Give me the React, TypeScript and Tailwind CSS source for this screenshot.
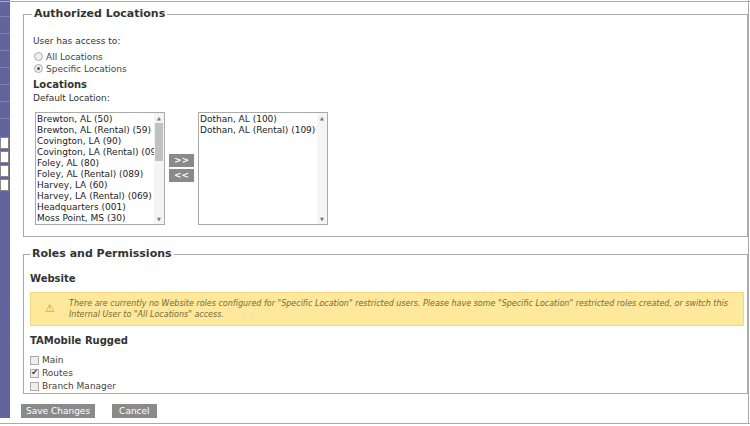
const left = [
  "Brewton, AL (50)",
  "Brewton, AL (Rental) (59)",
  "Covington, LA (90)",
  "Covington, LA (Rental) (099)",
  "Foley, AL (80)",
  "Foley, AL (Rental) (089)",
  "Harvey, LA (60)",
  "Harvey, LA (Rental) (069)",
  "Headquarters (001)",
  "Moss Point, MS (30)",
];
const right = ["Dothan, AL (100)", "Dothan, AL (Rental) (109)"];

const verdana = { fontFamily: "'DejaVu Sans', Verdana, sans-serif" };

function Legend({ children }: { children: string }) {
  return (
    <legend className="px-[2px] text-[11px] font-bold text-[#333]" style={verdana}>
      {children}
    </legend>
  );
}

function Radio({ checked }: { checked?: boolean }) {
  return (
    <span className="inline-flex w-[9px] h-[9px] rounded-full border border-[#aaa] bg-[#eee] items-center justify-center mr-[3px]">
      {checked && <span className="w-[3px] h-[3px] rounded-full bg-[#555]" />}
    </span>
  );
}

function Check({ checked }: { checked?: boolean }) {
  return (
    <span className="inline-flex w-[9px] h-[9px] border border-[#aaa] bg-[#eee] items-center justify-center mr-[3px] text-[8px] leading-none text-[#333]">
      {checked ? "✔" : ""}
    </span>
  );
}

function ListBox({ items, scroll }: { items: string[]; scroll?: boolean }) {
  return (
    <div className="flex w-[130px] h-[113px] border border-[#aaa] bg-white overflow-hidden">
      <div className="flex-1 pl-[1px] pt-[1px] text-[9px] leading-[11px] text-[#222] whitespace-nowrap overflow-hidden font-['Liberation_Sans',Arial,sans-serif]">
        {items.map((i) => (
          <div key={i}>{i}</div>
        ))}
      </div>
      <div className="w-[10px] bg-[#f4f4f4] flex flex-col items-center text-[5px] text-[#777]">
        <span className="h-[10px] leading-[10px]">▲</span>
        <div className="flex-1 w-full">
          {scroll && <div className="h-[38px] bg-[#c1c1c1] mx-[1px]" />}
        </div>
        <span className="h-[10px] leading-[10px]">▼</span>
      </div>
    </div>
  );
}

export default function App() {
  return (
    <div className="w-[750px] h-[426px] bg-white relative overflow-hidden text-[#333]" style={verdana}>
      <div className="absolute top-[1px] left-0 right-0 h-px bg-[#aaa]" />
      <div className="absolute bottom-[2px] left-0 right-0 h-px bg-[#aaa]" />
      <div className="absolute top-0 bottom-[3px] right-[1px] w-px bg-[#aaa]" />
      <div className="flex h-full">
        <div className="w-[10px] h-[418px] bg-[#64649c] flex flex-col">
          {[...Array(7)].map((_, i) => (
            <div key={i} className="h-[17px] border-b border-[#8080b4]" />
          ))}
          <div className="h-[18px]" />
          {[...Array(4)].map((_, i) => (
            <div key={i} className="w-[9px] h-[12px] bg-white border border-[#888] mb-[2px]" />
          ))}
        </div>
        <div className="flex-1 pl-[13px] pr-[2px] pt-[6px]">
          <fieldset className="border border-[#aaa] pl-[8px] pr-2 pt-[12px] pb-[10px] mb-[9px] h-[231px]">
            <Legend>Authorized Locations</Legend>
            <div className="text-[9px] leading-[12px] ml-[1px]">User has access to:</div>
            <div className="mt-[4px] text-[9px] leading-[12px] text-[#444] flex items-center ml-[2px]"><Radio />All Locations</div>
            <div className="text-[9px] leading-[12px] text-[#444] flex items-center ml-[2px]"><Radio checked />Specific Locations</div>
            <div className="mt-[4px] text-[10px] font-bold leading-[12px] ml-[1px]">Locations</div>
            <div className="text-[9px] leading-[14px] ml-[1px]">Default Location:</div>
            <div className="flex items-center mt-[7px] ml-[3px]">
              <ListBox items={left} scroll />
              <div className="flex flex-col gap-[2px] mx-[4px]">
                {[">>", "<<"].map((b) => (
                  <div key={b} className="w-[25px] h-[13px] bg-[#8a8a8a] text-white text-[9px] leading-[13px] text-center font-bold">{b}</div>
                ))}
              </div>
              <ListBox items={right} />
            </div>
          </fieldset>
          <fieldset className="border border-[#aaa] pl-[6px] pr-[3px] pt-[10px] pb-[4px] h-[148px]">
            <Legend>Roles and Permissions</Legend>
            <div className="text-[10px] font-bold leading-[12px]">Website</div>
            <div className="mt-[7px] flex items-center bg-[#fde89b] border border-[#f5d77e] h-[34px] text-[8px] italic text-[#7a6a3a] leading-[11px]">
              <span className="w-[38px] shrink-0 text-center text-[#d9a400] text-[11px] not-italic">⚠</span>
              <div className="whitespace-nowrap">There are currently no Website roles configured for "Specific Location" restricted users. Please have some "Specific Location" restricted roles created, or switch this<br />Internal User to "All Locations" access.</div>
            </div>
            <div className="mt-[9px] text-[10px] font-bold leading-[12px]">TAMobile Rugged</div>
            <div className="mt-[7px] text-[9px] leading-[13px] text-[#444]">
              <div className="flex items-center"><Check />Main</div>
              <div className="flex items-center"><Check checked />Routes</div>
              <div className="flex items-center"><Check />Branch Manager</div>
            </div>
          </fieldset>
          <div className="flex gap-[17px] mt-[10px] -ml-[2px]">
            <div className="h-[14px] px-[5px] bg-[#8a8a8a] text-white text-[9px] leading-[14px]">Save Changes</div>
            <div className="h-[14px] px-[7px] bg-[#8a8a8a] text-white text-[9px] leading-[14px]">Cancel</div>
          </div>
        </div>
      </div>
    </div>
  );
}
